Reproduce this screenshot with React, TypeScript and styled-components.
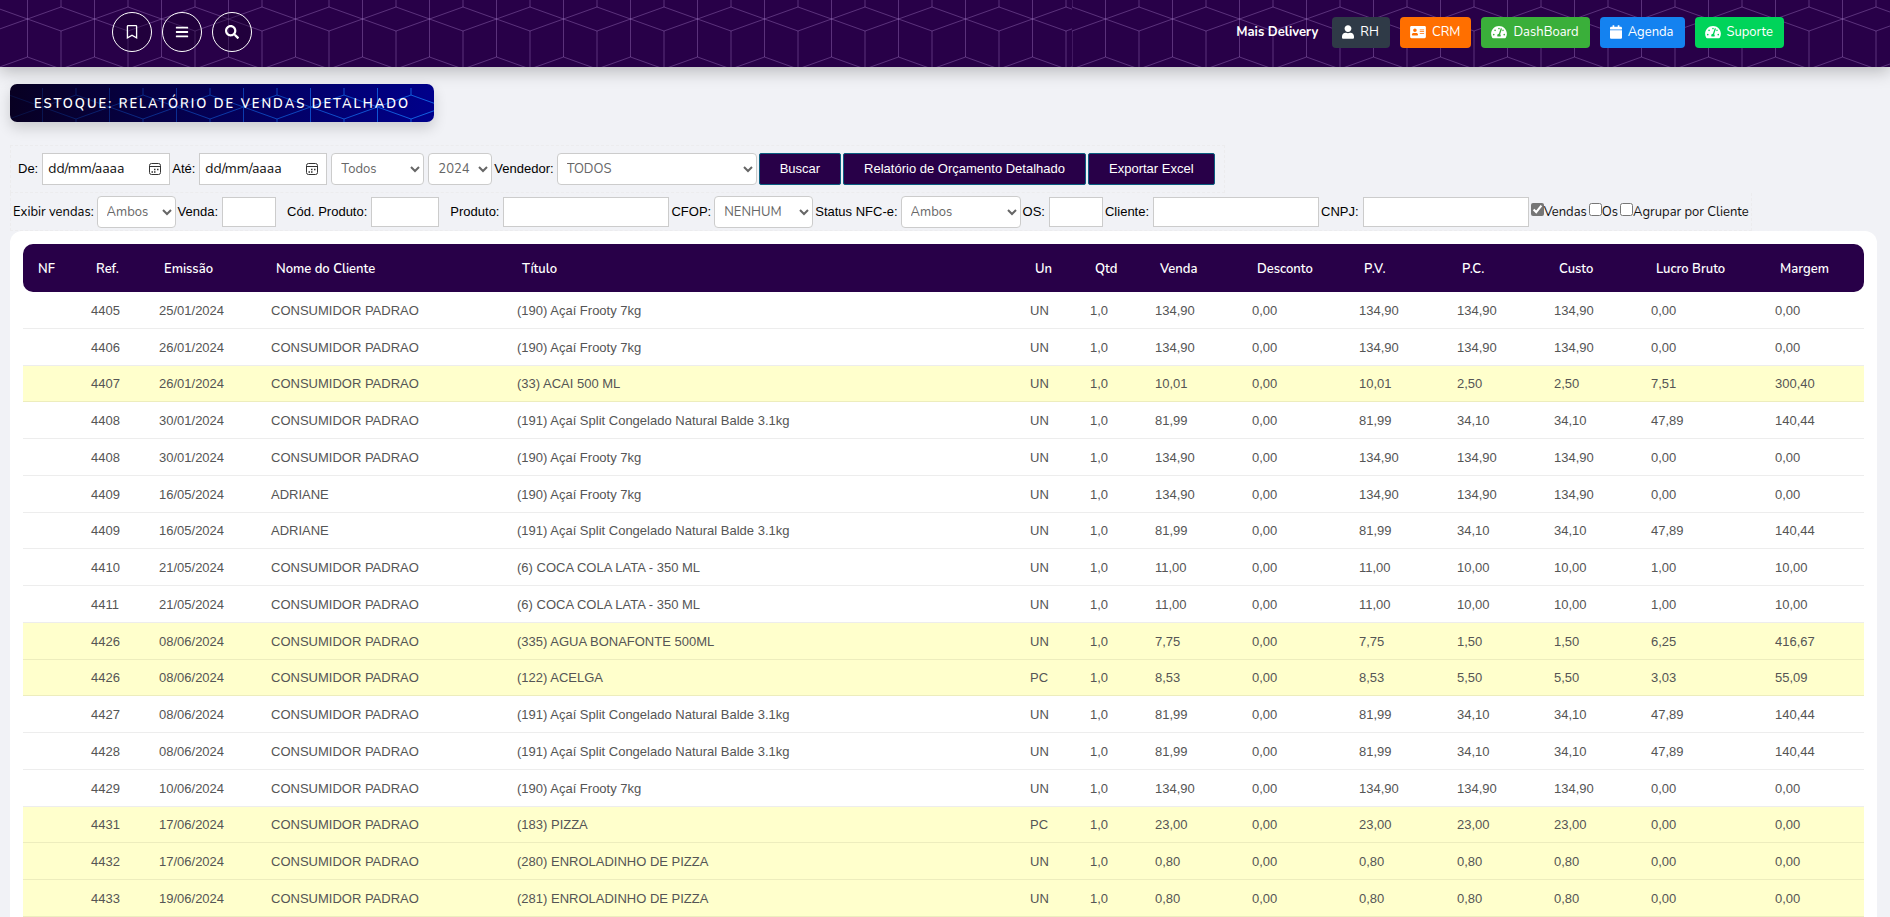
import React, { useId } from 'react';
import styled, { createGlobalStyle } from 'styled-components';
import {
  FaAddressCard,
  FaBars,
  FaCalendar,
  FaRegBookmark,
  FaSearch,
  FaTachometerAlt,
  FaUser,
} from 'react-icons/fa';

const nunito = '"Nunito", "Noto Sans", sans-serif';
const arial = 'Arial, "Liberation Sans", sans-serif';
const purple = '#280048';

const GlobalStyle = createGlobalStyle`
  *, *::before, *::after { box-sizing: border-box; }
  body {
    margin: 0;
    background: #f1f2f6;
    color: #111;
    font-family: ${nunito};
    font-size: 13px;
    line-height: 18px;
  }
  button, input, select { font: inherit; margin: 0; }
`;

const Page = styled.div`
  display: flex;
  flex-direction: column;
  min-height: 100vh;
`;

const TopBar = styled.header`
  position: relative;
  z-index: 1;
  display: flex;
  flex: none;
  align-items: center;
  justify-content: space-between;
  height: 67px;
  padding: 0 106px 3px 112px;
  background: ${purple};
  box-shadow: 0 4px 16px rgba(0, 0, 0, 0.25);
`;

const Backdrop = styled.svg`
  position: absolute;
  inset: 0;
  width: 100%;
  height: 100%;
`;

const ToolGroup = styled.nav`
  position: relative;
  display: flex;
  align-items: center;
  gap: 10px;
`;

const RoundButton = styled.button`
  display: flex;
  align-items: center;
  justify-content: center;
  width: 40px;
  height: 40px;
  padding: 0;
  border: 1px solid #fff;
  border-radius: 50%;
  background: rgba(20, 0, 40, 0.35);
  color: #fff;
  font-size: 14px;
`;

const Shortcuts = styled.nav`
  position: relative;
  display: flex;
  align-items: center;
  gap: 10px;
`;

const Company = styled.span`
  margin-right: 4px;
  color: #fff;
  font-weight: 700;
`;

const Shortcut = styled.a<{ $color: string; $icon: number }>`
  display: flex;
  align-items: center;
  gap: 6px;
  height: 31px;
  padding: 0 11px 0 10px;
  border-radius: 4px;
  background: ${(p) => p.$color};
  color: #fff;
  text-decoration: none;
  svg {
    flex: none;
    width: ${(p) => p.$icon}px;
    height: 14px;
  }
`;

const Title = styled.h1`
  position: relative;
  align-self: flex-start;
  margin: 17px 0 0 10px;
  padding: 11px 24px 9px;
  border-radius: 7px;
  background: linear-gradient(90deg, #080022, #00008b);
  box-shadow: 0 6px 14px rgba(0, 0, 0, 0.16);
  color: #fff;
  font-size: 13px;
  font-weight: 600;
  line-height: 18px;
  letter-spacing: 2px;
  white-space: nowrap;
  overflow: hidden;
`;

const TitleText = styled.span`
  position: relative;
`;

const Filters = styled.form`
  display: flex;
  flex-direction: column;
  align-items: flex-start;
  margin: 23px 0 0 10px;
`;

const FilterRow = styled.div<{ $main?: boolean }>`
  display: flex;
  align-items: center;
  gap: 2px;
  height: ${(p) => (p.$main ? 48 : 38)}px;
  padding: ${(p) => (p.$main ? '0 9px 0 7px' : '0 2px')};
  border: 1px dashed #ececee;
  border-top-width: ${(p) => (p.$main ? 1 : 0)}px;
  white-space: nowrap;
`;

const Field = styled.label<{ $plain?: boolean; $before?: number; $gap?: number }>`
  display: flex;
  align-items: center;
  gap: ${(p) => p.$gap ?? 4}px;
  margin-left: ${(p) => p.$before ?? 0}px;
  color: #000;
  font-family: ${(p) => (p.$plain ? nunito : arial)};
`;

const TextBox = styled.input<{ $w: number }>`
  width: ${(p) => p.$w}px;
  height: 30px;
  padding: 0 6px;
  border: 1px solid #ccc;
  background: #fff;
`;

const DateBox = styled.span`
  display: flex;
  align-items: center;
  width: 128px;
  height: 32px;
  padding: 0 8px 0 5px;
  border: 1px solid #ccc;
  background: #fff;
`;

const DateInput = styled.input`
  flex: 1;
  min-width: 0;
  padding: 0;
  border: 0;
  background: transparent;
  font-family: ${nunito};
  font-size: 14px;
  &::placeholder { color: #111; opacity: 1; }
`;

const Select = styled.select<{ $w: number }>`
  width: ${(p) => p.$w}px;
  height: 32px;
  padding: 0 0 0 5px;
  border: 1px solid #ccc;
  border-radius: 4px;
  background: #fff;
  color: #666;
  font-family: ${nunito};
  font-size: 13px;
`;

const ActionButton = styled.button`
  height: 32px;
  padding: 0 20px;
  border: 1px solid #0b5f80;
  border-radius: 2px;
  background: ${purple};
  color: #fff;
  font-family: ${arial};
`;

const Check = styled.label`
  display: flex;
  align-items: center;
  padding-top: 1px;
  input {
    width: 13px;
    height: 13px;
    margin-bottom: 5px;
    accent-color: #767676;
  }
`;

const Panel = styled.main`
  display: flex;
  flex: 1;
  flex-direction: column;
  margin: 0 13px 0 10px;
  padding: 13px 13px 0;
  border-radius: 12px 12px 0 0;
  background: #fff;
`;

const Table = styled.table`
  flex: 1;
  width: 100%;
  table-layout: fixed;
  border-collapse: separate;
  border-spacing: 0;
`;

const Th = styled.th`
  height: 48px;
  padding: 2px 15px 0;
  background: ${purple};
  color: #fff;
  font-weight: 600;
  text-align: left;
  white-space: nowrap;
  &:first-child { border-radius: 10px 0 0 10px; }
  &:last-child { border-radius: 0 10px 10px 0; }
`;

const Tr = styled.tr<{ $marked: boolean }>`
  background: ${(p) => (p.$marked ? '#ffffcc' : '#fff')};
`;

const Td = styled.td`
  padding: 9px 10px 7px;
  border-bottom: 1px solid rgba(0, 0, 0, 0.07);
  color: #555;
  font-family: ${arial};
  white-space: nowrap;
`;

function Lattice({ color, y, x, fade }: { color: string; x: number; y: number; fade?: boolean }) {
  const id = useId().replace(/[^a-zA-Z0-9]/g, '');
  return (
    <Backdrop aria-hidden="true">
      <defs>
        <pattern id={`${id}cell`} width="67" height="200" x={x} y={y} patternUnits="userSpaceOnUse">
          <path
            d="M33.5 0V57L0 69M33.5 57L67 69M33.5 19L0 7M33.5 19L67 7M33.5 19L0 31M33.5 19L67 31M0 0V7M67 0V7M0 31V100M67 31V100"
            fill="none"
            stroke={color}
            strokeWidth="1"
          />
        </pattern>
        <pattern id={`${id}strip`} width="1078" height="200" x="-6" y="0" patternUnits="userSpaceOnUse">
          <rect width="1078" height="200" fill={`url(#${id}cell)`} />
        </pattern>
        <linearGradient id={`${id}fade`}>
          <stop offset="0" stopColor="#fff" stopOpacity="0.15" />
          <stop offset="1" stopColor="#fff" />
        </linearGradient>
        <mask id={`${id}mask`}>
          <rect width="100%" height="100%" fill={`url(#${id}fade)`} />
        </mask>
      </defs>
      <rect
        width="100%"
        height="100%"
        fill={`url(#${id}${fade ? 'cell' : 'strip'})`}
        mask={fade ? `url(#${id}mask)` : undefined}
      />
    </Backdrop>
  );
}

function DateField({ label }: { label: string }) {
  return (
    <Field>
      {label}
      <DateBox>
        <DateInput type="text" placeholder="dd/mm/aaaa" />
        <svg width="12" height="14" viewBox="0 0 12 14" fill="none" stroke="#333" aria-hidden="true">
          <rect x="0.5" y="1.5" width="11" height="11" rx="2" />
          <path d="M1 4.5h10" />
          <path d="M5 7.5h1.5M8 7.5h1.5M2.5 10h1.5M5 10h1.5" strokeWidth="1.5" />
        </svg>
      </DateBox>
    </Field>
  );
}

const columns: [string, number | undefined][] = [
  ['NF', 58], ['Ref.', 68], ['Emissão', 112], ['Nome do Cliente', 246], ['Título', undefined],
  ['Un', 60], ['Qtd', 65], ['Venda', 97], ['Desconto', 107], ['P.V.', 98], ['P.C.', 97],
  ['Custo', 97], ['Lucro Bruto', 124], ['Margem', 99],
];

interface Sale {
  ref: string;
  date: string;
  item: string;
  price: string;
  cost: string;
  profit: string;
  margin: string;
  unit?: string;
  client?: string;
  marked?: boolean;
}

const frooty = { item: '(190) Açaí Frooty 7kg', price: '134,90', cost: '134,90', profit: '0,00', margin: '0,00' };
const split = { item: '(191) Açaí Split Congelado Natural Balde 3.1kg', price: '81,99', cost: '34,10', profit: '47,89', margin: '140,44' };
const coca = { item: '(6) COCA COLA LATA - 350 ML', price: '11,00', cost: '10,00', profit: '1,00', margin: '10,00' };

const sales: Sale[] = [
  { ref: '4405', date: '25/01/2024', ...frooty },
  { ref: '4406', date: '26/01/2024', ...frooty },
  { ref: '4407', date: '26/01/2024', item: '(33) ACAI 500 ML', price: '10,01', cost: '2,50', profit: '7,51', margin: '300,40', marked: true },
  { ref: '4408', date: '30/01/2024', ...split },
  { ref: '4408', date: '30/01/2024', ...frooty },
  { ref: '4409', date: '16/05/2024', client: 'ADRIANE', ...frooty },
  { ref: '4409', date: '16/05/2024', client: 'ADRIANE', ...split },
  { ref: '4410', date: '21/05/2024', ...coca },
  { ref: '4411', date: '21/05/2024', ...coca },
  { ref: '4426', date: '08/06/2024', item: '(335) AGUA BONAFONTE 500ML', price: '7,75', cost: '1,50', profit: '6,25', margin: '416,67', marked: true },
  { ref: '4426', date: '08/06/2024', item: '(122) ACELGA', unit: 'PC', price: '8,53', cost: '5,50', profit: '3,03', margin: '55,09', marked: true },
  { ref: '4427', date: '08/06/2024', ...split },
  { ref: '4428', date: '08/06/2024', ...split },
  { ref: '4429', date: '10/06/2024', ...frooty },
  { ref: '4431', date: '17/06/2024', item: '(183) PIZZA', unit: 'PC', price: '23,00', cost: '23,00', profit: '0,00', margin: '0,00', marked: true },
  { ref: '4432', date: '17/06/2024', item: '(280) ENROLADINHO DE PIZZA', price: '0,80', cost: '0,80', profit: '0,00', margin: '0,00', marked: true },
  { ref: '4433', date: '19/06/2024', item: '(281) ENROLADINHO DE PIZZA', price: '0,80', cost: '0,80', profit: '0,00', margin: '0,00', marked: true },
];

export default function App() {
  return (
    <Page>
      <GlobalStyle />
      <TopBar>
        <Lattice color="rgba(190,150,225,0.33)" x={0} y={0} />
        <ToolGroup>
          <RoundButton type="button" aria-label="Favoritos"><FaRegBookmark /></RoundButton>
          <RoundButton type="button" aria-label="Menu"><FaBars /></RoundButton>
          <RoundButton type="button" aria-label="Pesquisar"><FaSearch /></RoundButton>
        </ToolGroup>
        <Shortcuts>
          <Company>Mais Delivery</Company>
          <Shortcut href="#rh" $color="#2f3a47" $icon={12}><FaUser />RH</Shortcut>
          <Shortcut href="#crm" $color="#ff6f00" $icon={16}><FaAddressCard />CRM</Shortcut>
          <Shortcut href="#dashboard" $color="#3aaf3a" $icon={16}><FaTachometerAlt />DashBoard</Shortcut>
          <Shortcut href="#agenda" $color="#1482f0" $icon={12}><FaCalendar />Agenda</Shortcut>
          <Shortcut href="#suporte" $color="#00d45a" $icon={16}><FaTachometerAlt />Suporte</Shortcut>
        </Shortcuts>
      </TopBar>

      <Title>
        <Lattice color="#1260e0" x={-1} y={4} fade />
        <TitleText>ESTOQUE: RELATÓRIO DE VENDAS DETALHADO</TitleText>
      </Title>

      <Filters onSubmit={(e) => e.preventDefault()}>
        <FilterRow $main>
          <DateField label="De:" />
          <DateField label="Até:" />
          <Field $before={2}>
            <Select $w={93} aria-label="Mês"><option>Todos</option></Select>
          </Field>
          <Field $before={2}>
            <Select $w={64} aria-label="Ano"><option>2024</option></Select>
          </Field>
          <Field $gap={3}>Vendedor:<Select $w={200}><option>TODOS</option></Select></Field>
          <ActionButton type="submit">Buscar</ActionButton>
          <ActionButton type="button">Relatório de Orçamento Detalhado</ActionButton>
          <ActionButton type="button">Exportar Excel</ActionButton>
        </FilterRow>
        <FilterRow>
          <Field $plain $gap={3}>Exibir vendas:<Select $w={79}><option>Ambos</option></Select></Field>
          <Field>Venda:<TextBox $w={54} type="text" /></Field>
          <Field $before={9}>Cód. Produto:<TextBox $w={68} type="text" /></Field>
          <Field $before={9}>Produto:<TextBox $w={166} type="text" /></Field>
          <Field $gap={3}>CFOP:<Select $w={99}><option>NENHUM</option></Select></Field>
          <Field $gap={3}>Status NFC-e:<Select $w={120}><option>Ambos</option></Select></Field>
          <Field>OS:<TextBox $w={54} type="text" /></Field>
          <Field>Cliente:<TextBox $w={166} type="text" /></Field>
          <Field>CNPJ:<TextBox $w={166} type="text" /></Field>
          <Check><input type="checkbox" defaultChecked />Vendas</Check>
          <Check><input type="checkbox" />Os</Check>
          <Check><input type="checkbox" />Agrupar por Cliente</Check>
        </FilterRow>
      </Filters>

      <Panel>
        <Table>
          <colgroup>
            {columns.map(([name, width]) => <col key={name} width={width} />)}
          </colgroup>
          <thead>
            <tr>{columns.map(([name]) => <Th key={name} scope="col">{name}</Th>)}</tr>
          </thead>
          <tbody>
            {sales.map((s, i) => (
              <Tr key={i} $marked={!!s.marked}>
                <Td />
                <Td>{s.ref}</Td>
                <Td>{s.date}</Td>
                <Td>{s.client ?? 'CONSUMIDOR PADRAO'}</Td>
                <Td>{s.item}</Td>
                <Td>{s.unit ?? 'UN'}</Td>
                <Td>1,0</Td>
                <Td>{s.price}</Td>
                <Td>0,00</Td>
                <Td>{s.price}</Td>
                <Td>{s.cost}</Td>
                <Td>{s.cost}</Td>
                <Td>{s.profit}</Td>
                <Td>{s.margin}</Td>
              </Tr>
            ))}
          </tbody>
        </Table>
      </Panel>
    </Page>
  );
}
